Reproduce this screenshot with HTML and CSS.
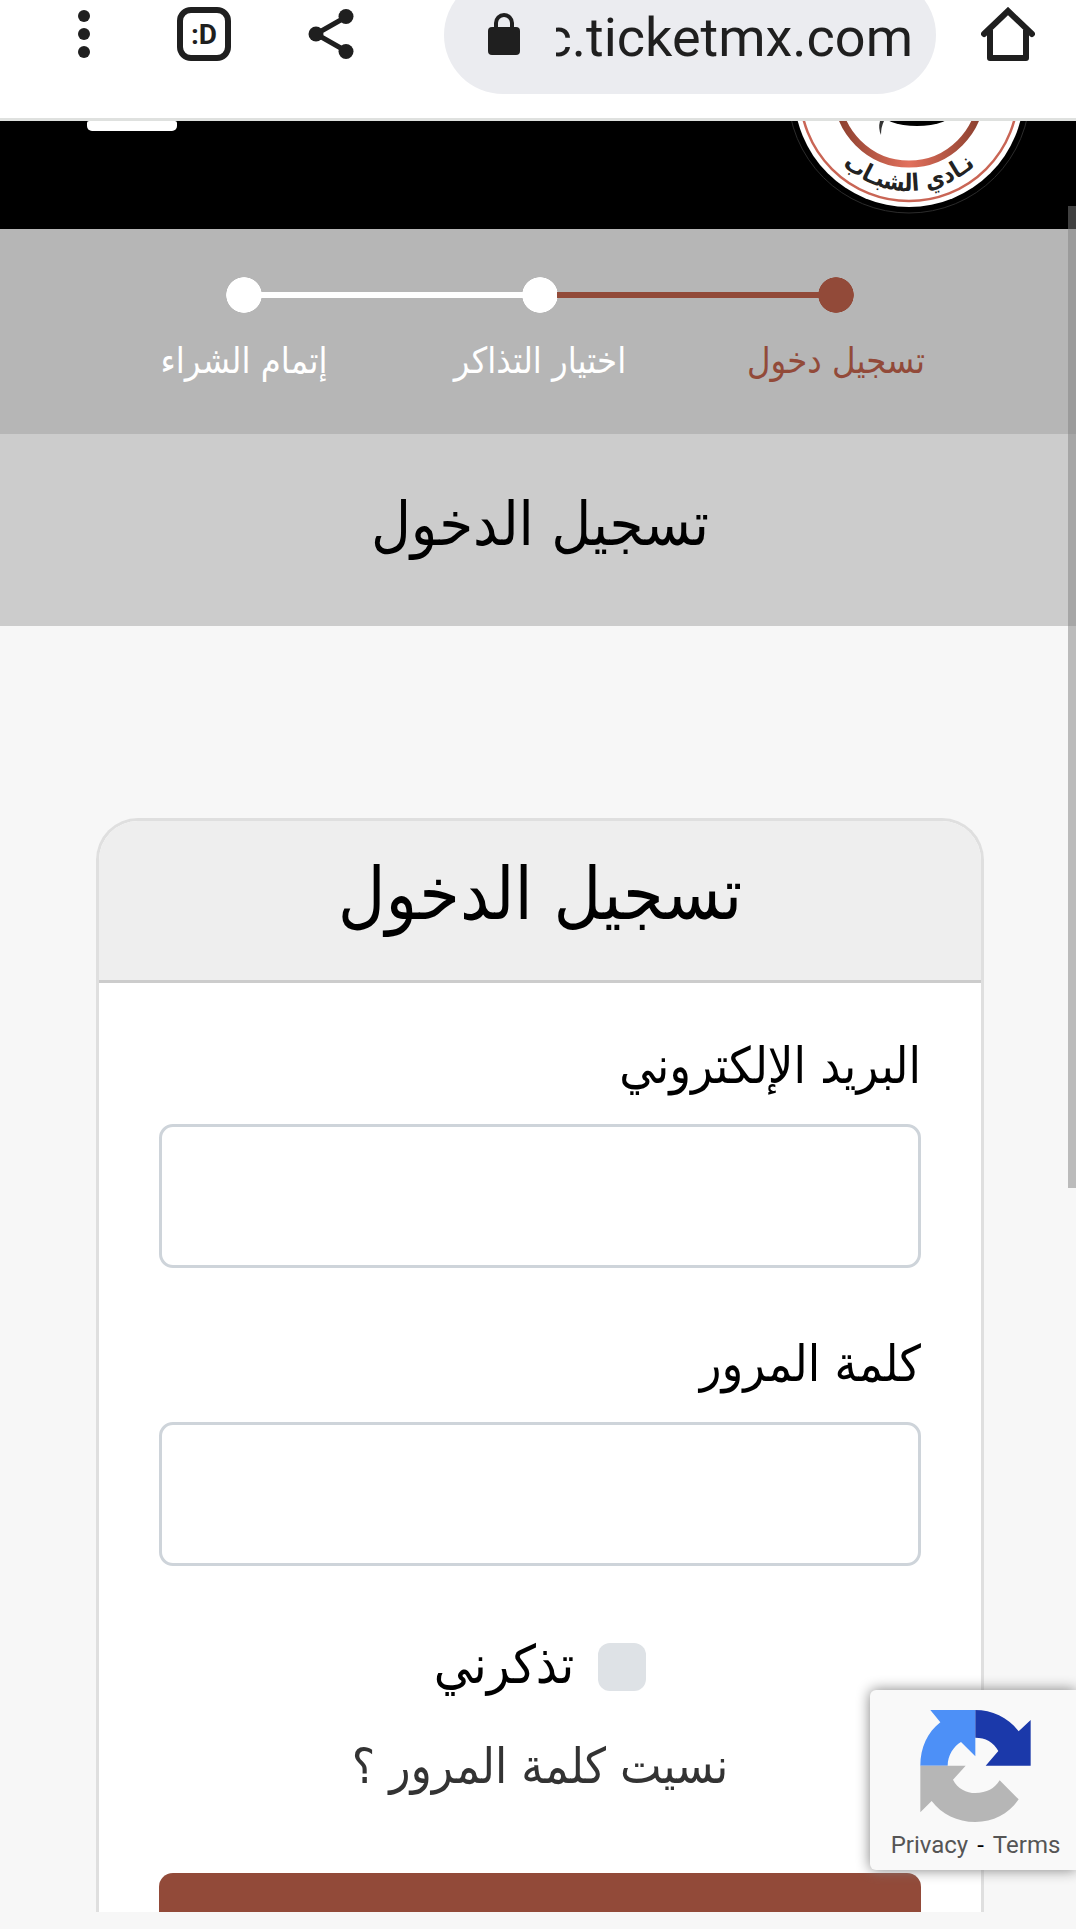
FILE: index.html
```html
<!DOCTYPE html>
<html lang="ar" dir="rtl">
<head>
<meta charset="utf-8">
<meta name="viewport" content="width=device-width, initial-scale=1">
<title>تسجيل الدخول</title>
<link rel="stylesheet" href="styles.css">
</head>
<body>
<div class="browser-bar" dir="ltr">
  <button class="bar-button" type="button" aria-label="القائمة">
    <svg width="12" height="48" viewBox="0 0 12 48" fill="currentColor"><circle cx="6" cy="6" r="6"/><circle cx="6" cy="24" r="6"/><circle cx="6" cy="42" r="6"/></svg>
  </button>
  <button class="bar-button tabs" type="button">:D</button>
  <button class="bar-button share" type="button" aria-label="مشاركة">
    <svg width="46" height="50" viewBox="0 0 46 50" fill="currentColor"><path d="M38 8 8 25l30 17" fill="none" stroke="currentColor" stroke-width="5"/><circle cx="8" cy="25" r="7.5"/><circle cx="38" cy="7.5" r="7.5"/><circle cx="38" cy="42.5" r="7.5"/></svg>
  </button>
  <div class="address">
    <svg class="lock" width="32" height="42" viewBox="0 0 32 42"><path d="M8 18V10a8 8 0 0 1 16 0v8" fill="none" stroke="currentColor" stroke-width="4"/><rect y="14" width="32" height="28" rx="4" fill="currentColor"/></svg>
    <span class="url">c.ticketmx.com</span>
  </div>
  <a class="bar-button" href="#" aria-label="الصفحة الرئيسية">
    <svg width="54" height="54" viewBox="0 0 54 54" fill="none" stroke="currentColor" stroke-width="6"><path d="M3 27 27 4l24 23" stroke-linecap="round"/><path d="M9 23v28h36V23" stroke-linejoin="round"/></svg>
  </a>
</div>
<main class="page">
  <header class="site-header" dir="ltr">
    <button class="menu" type="button" aria-label="القائمة"></button>
    <svg class="logo" width="250" height="108" viewBox="0 0 250 108">
      <defs>
        <linearGradient id="ring" x1="0" x2="1"><stop offset="0" stop-color="#8a3f2e"/><stop offset=".5" stop-color="#e2705c"/><stop offset="1" stop-color="#8a3f2e"/></linearGradient>
        <path id="arc" d="M26 -29a99 99 0 0 0 198 0"/>
      </defs>
      <circle cx="125" cy="-29" r="121" fill="#000" stroke="#2c2c2c"/>
      <circle cx="125" cy="-29" r="115" fill="#fff"/>
      <circle cx="125" cy="-29" r="109" fill="none" stroke="#c96555" stroke-width="2.5"/>
      <circle cx="125" cy="-29" r="72" fill="none" stroke="url(#ring)" stroke-width="7"/>
      <ellipse cx="133" cy="-9" rx="36" ry="14" fill="#000"/>
      <path d="M96 0h4q-3 6-3 14-3-7-1-14z" fill="#333"/>
      <text class="logo-text" direction="rtl"><textPath href="#arc" startOffset="50%">نـادي الشبـاب</textPath></text>
    </svg>
  </header>
  <ol class="steps">
    <li class="step current"><span class="marker"></span>تسجيل دخول</li>
    <li class="step"><span class="marker"></span>اختيار التذاكر</li>
    <li class="step"><span class="marker"></span>إتمام الشراء</li>
  </ol>
  <h1 class="page-title">تسجيل الدخول</h1>
  <form class="card">
    <h2 class="card-title">تسجيل الدخول</h2>
    <div class="card-body">
      <div class="field">
        <label for="email">البريد الإلكتروني</label>
        <input id="email" type="email" dir="ltr">
      </div>
      <div class="field">
        <label for="password">كلمة المرور</label>
        <input id="password" type="password" dir="ltr">
      </div>
      <div class="remember">
        <input id="remember" type="checkbox">
        <label for="remember">تذكرني</label>
      </div>
      <a class="forgot" href="#">نسيت كلمة المرور ؟</a>
      <button class="submit" type="submit" aria-label="دخول"></button>
    </div>
  </form>
  <aside class="captcha" dir="ltr">
    <svg width="111" height="112" viewBox="240 149 331 336"><path fill="#4d90f7" d="M405 149H270l30 37c-38 29-60 76-60 130h82c0-31 18-58 40-71l43 43z"/><path fill="#1b39aa" d="M405 149c50 0 100 23 130 64l36-34v137H436l38-44c-14-27-39-40-69-40z"/><path fill="#b6b6b6" d="M240 316h136l-38 42c14 27 40 40 67 40 35 0 57-13 73-38l57 57c-30 43-75 68-130 68s-100-23-131-63l-34 34z"/></svg>
    <div class="captcha-links"><a href="#">Privacy</a><span>-</span><a href="#">Terms</a></div>
  </aside>
</main>
<div class="scroll-thumb"></div>
</body>
</html>
```
FILE: styles.css
```css
* { box-sizing: border-box; }

body {
  position: relative;
  margin: 0;
  padding-bottom: 17px;
  background: #f7f7f7;
  color: #000;
  font-family: "DejaVu Sans Condensed", "DejaVu Sans", sans-serif;
  font-size: 50px;
}

h1, h2, ol { margin: 0; padding: 0; font-weight: normal; }
button { padding: 0; border: 0; background: none; color: inherit; font: inherit; }
a { color: inherit; text-decoration: none; }
svg { display: block; flex: none; }

.browser-bar {
  display: flex;
  align-items: flex-start;
  height: 121px;
  padding: 7px 41px 0 78px;
  overflow: hidden;
  border-bottom: 3px solid #dfe1df;
  background: #fff;
  color: #1f1f1f;
  font-family: Roboto, sans-serif;
}
.bar-button { display: flex; align-items: center; height: 54px; }
.tabs {
  justify-content: center;
  width: 54px;
  margin-left: 87px;
  border: 6px solid #1f1f1f;
  border-radius: 14px;
  font-size: 28px;
  font-weight: bold;
}
.share { margin-left: 77px; }
.address {
  display: flex;
  flex: 1;
  align-items: center;
  gap: 32px;
  min-width: 0;
  height: 118px;
  margin: -31px 45px 0 90px;
  padding: 0 23px 0 44px;
  border-radius: 59px;
  background: #ebecf0;
}
.lock { margin-top: -2px; }
.url {
  display: flex;
  flex: 1;
  justify-content: flex-end;
  min-width: 0;
  margin-left: 4px;
  padding-top: 6px;
  overflow: hidden;
  font-size: 54px;
  line-height: 72px;
}

.page { position: relative; overflow: hidden; }
.site-header {
  display: flex;
  align-items: flex-start;
  justify-content: space-between;
  padding: 0 42px 0 87px;
  background: #000;
}
.menu { width: 90px; height: 10px; border-radius: 2px 2px 5px 5px; background: #fff; }
.logo-text { fill: #222; font-size: 24px; font-weight: bold; text-anchor: middle; }

.steps {
  display: flex;
  height: 205px;
  padding: 48px 92px 0 96px;
  background: #b6b6b6;
  color: #fff;
  font-size: 36px;
  line-height: 60px;
  list-style: none;
}
.step { flex: 1; text-align: center; }
.marker {
  display: flex;
  align-items: center;
  justify-content: space-between;
  gap: 34px;
  height: 36px;
  margin-bottom: 18px;
  background: radial-gradient(circle closest-side, #fff 97%, transparent) center / 36px 36px no-repeat;
}
.marker::before, .marker::after { flex: 1; height: 6px; background: #fff; content: ""; }
.step:first-child .marker::before, .step:last-child .marker::after { visibility: hidden; }
.current { color: #924a39; }
.current .marker { background-image: radial-gradient(circle closest-side, #924a39 97%, transparent); }
.current .marker::after, .current + .step .marker::before { background: #924a39; }

.page-title {
  padding: 45px 0 57px 4px;
  background: #ccc;
  font-size: 61px;
  line-height: 90px;
  text-align: center;
}

.card {
  margin: 192px 92px 0 96px;
  border: 3px solid #dfdfdf;
  border-bottom: 0;
  border-radius: 42px 42px 0 0;
  background: #fff;
}
.card-title {
  padding: 17px 0 31px;
  border-bottom: 3px solid #ccc;
  border-radius: 39px 39px 0 0;
  background: #eee;
  font-size: 73px;
  line-height: 111px;
  text-align: center;
}
.card-body { padding: 51px 60px 0; line-height: 64px; }
.field { display: grid; gap: 26px; margin-bottom: 64px; }
.field input {
  width: 100%;
  height: 144px;
  padding: 0 24px;
  border: 3px solid #ced4da;
  border-radius: 14px;
  background: #fff;
  font: inherit;
}
.remember { display: flex; align-items: center; justify-content: center; gap: 24px; height: 74px; }
.remember input {
  width: 48px;
  height: 48px;
  margin: 0;
  border-radius: 12px;
  background: #dee2e6;
  appearance: none;
}
.remember label { padding-bottom: 4px; font-size: 53px; }
.forgot { display: block; margin: 28px 0 71px; color: #333; font-size: 49px; line-height: 70px; text-align: center; }
.submit { display: block; width: 100%; height: 39px; border-radius: 14px 14px 0 0; background: #924a39; }

.captcha {
  position: absolute;
  right: 0;
  bottom: 42px;
  display: flex;
  flex-direction: column;
  align-items: center;
  gap: 7px;
  width: 206px;
  height: 180px;
  padding: 20px 0 0 5px;
  border-radius: 6px 0 0 6px;
  background: #f9f9f9;
  box-shadow: 0 0 14px #808080;
  font: 24px/32px Roboto, sans-serif;
}
.captcha-links { display: flex; gap: 9px; color: #000; }
.captcha-links a { color: #555; }

.scroll-thumb {
  position: absolute;
  top: 206px;
  right: 0;
  width: 8px;
  height: 982px;
  background: rgba(128, 128, 128, .5);
}
```
